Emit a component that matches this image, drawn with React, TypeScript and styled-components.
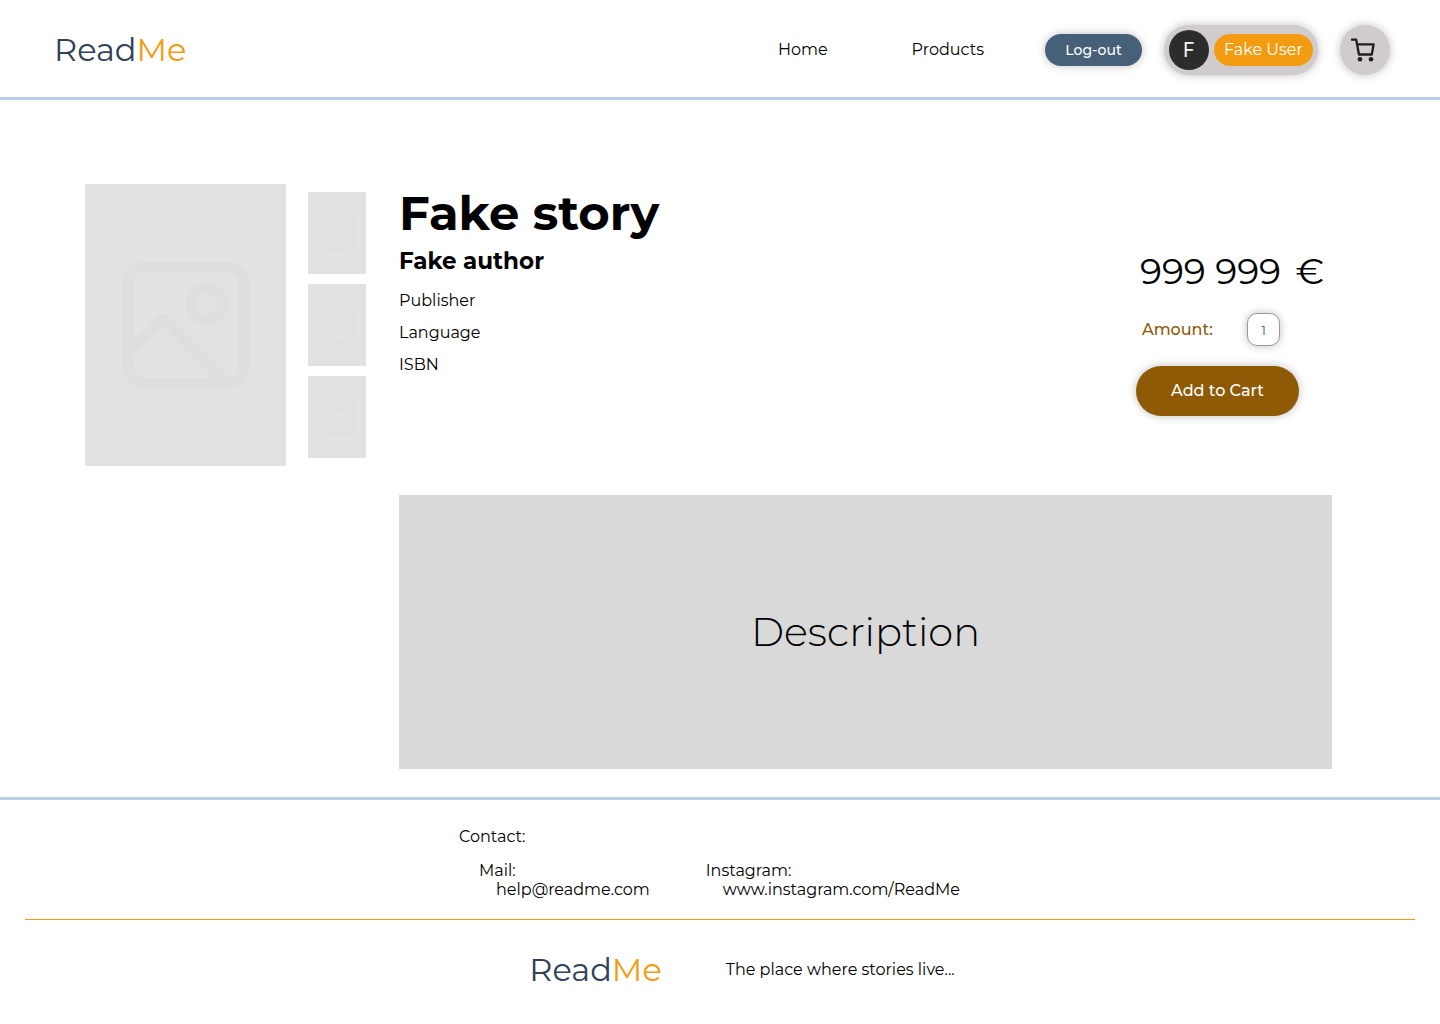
import React from 'react';
import styled, { createGlobalStyle } from 'styled-components';

const colors = {
  ink: '#000000',
  navy: '#2f4257',
  orange: '#f39c12',
  steel: '#46607a',
  rule: '#b9cfe7',
  pill: '#d0cccd',
  brown: '#8e5a05',
};

const GlobalStyle = createGlobalStyle`
  *, *::before, *::after { box-sizing: border-box; }
  body {
    margin: 0;
    background: #ffffff;
    color: ${colors.ink};
    font-family: Montserrat, Inter, 'Open Sans', sans-serif;
    font-size: 16px;
    line-height: 20px;
  }
  h1, h2, p, ul, figure, dl, dd { margin: 0; padding: 0; }
  button, input { font: inherit; }
  a { color: inherit; text-decoration: none; }
`;

const Page = styled.div`
  display: flex;
  flex-direction: column;
  min-height: 100vh;
`;

const Header = styled.header`
  display: flex;
  align-items: center;
  justify-content: space-between;
  height: 100px;
  padding: 3px 50px 0 54px;
  border-bottom: 3px solid ${colors.rule};
`;

const Brand = styled.a`
  font-size: 32px;
  line-height: 40px;
  font-weight: 400;
  color: ${colors.navy};
`;

const BrandAccent = styled.span`
  color: ${colors.orange};
`;

const HeaderActions = styled.div`
  display: flex;
  align-items: center;
  gap: 22px;
`;

const Nav = styled.nav`
  display: flex;
  gap: 84px;
  margin-right: 39px;
`;

const LogoutButton = styled.button`
  width: 97px;
  height: 32px;
  padding: 0;
  border: 0;
  border-radius: 16px;
  background: ${colors.steel};
  color: #ffffff;
  font-size: 14px;
  font-weight: 500;
  box-shadow: 0 0 10px rgba(0, 0, 0, 0.25);
`;

const UserPill = styled.div`
  display: flex;
  align-items: center;
  gap: 5px;
  height: 50px;
  padding: 0 5px;
  border-radius: 25px;
  background: ${colors.pill};
  box-shadow: 0 0 10px rgba(0, 0, 0, 0.25);
`;

const Avatar = styled.span`
  display: flex;
  align-items: center;
  justify-content: center;
  width: 40px;
  height: 40px;
  border-radius: 50%;
  background: #2c2c2c;
  color: #f5f5f5;
  font-family: Inter, sans-serif;
  font-size: 20px;
`;

const UserButton = styled.button`
  width: 99px;
  height: 32px;
  padding: 0;
  border: 0;
  border-radius: 16px;
  background: ${colors.orange};
  color: #ffffff;
`;

const CartButton = styled.button`
  display: flex;
  align-items: center;
  justify-content: center;
  width: 50px;
  height: 50px;
  padding: 0 4px 0 0;
  border: 0;
  border-radius: 50%;
  background: ${colors.pill};
  box-shadow: 0 0 10px rgba(0, 0, 0, 0.25);
`;

const Main = styled.main`
  display: grid;
  grid-template-columns: 281px minmax(0, 1fr) 196px;
  column-gap: 33px;
  row-gap: 29px;
  padding: 84px 108px 28px 85px;
`;

const Gallery = styled.section`
  display: flex;
  align-items: center;
  gap: 22px;
  height: 282px;
`;

const Cover = styled.figure`
  display: flex;
  align-items: center;
  justify-content: center;
  width: 201px;
  height: 282px;
  background: #e2e2e2;
`;

const Thumbnails = styled.ul`
  display: flex;
  flex-direction: column;
  gap: 10px;
  list-style: none;
`;

const Thumbnail = styled.li<{ $flipped?: boolean }>`
  display: flex;
  align-items: center;
  justify-content: center;
  width: 58px;
  height: 82px;
  background: #e2e2e2;
  transform: ${({ $flipped }) => ($flipped ? 'scaleY(-1)' : 'none')};
`;

const Title = styled.h1`
  font-size: 48px;
  line-height: 58px;
  font-weight: 700;
`;

const Author = styled.h2`
  padding-top: 5px;
  font-size: 23px;
  line-height: 28px;
  font-weight: 700;
`;

const Facts = styled.ul`
  display: flex;
  flex-direction: column;
  gap: 12px;
  padding-top: 16px;
  list-style: none;
`;

const Purchase = styled.section`
  padding-top: 64px;
`;

const Price = styled.p`
  display: flex;
  justify-content: space-between;
  padding: 0 8px 0 4px;
  font-size: 36px;
  line-height: 46px;
  font-weight: 400;
`;

const AmountRow = styled.div`
  display: flex;
  align-items: center;
  justify-content: space-between;
  padding: 19px 52px 20px 6px;
`;

const AmountLabel = styled.label`
  color: ${colors.brown};
  font-weight: 500;
`;

const AmountInput = styled.input`
  width: 33px;
  height: 33px;
  padding: 0;
  border: 1px solid #999999;
  border-radius: 10px;
  background: #ffffff;
  color: #555555;
  font-size: 13px;
  text-align: center;
  box-shadow: 0 0 8px rgba(0, 0, 0, 0.25);
`;

const AddButton = styled.button`
  width: 163px;
  height: 50px;
  padding: 0;
  border: 0;
  border-radius: 25px;
  background: ${colors.brown};
  color: #ffffff;
  font-weight: 500;
  box-shadow: 0 0 10px rgba(0, 0, 0, 0.25);
`;

const Description = styled.section`
  grid-column: 2 / -1;
  display: flex;
  align-items: center;
  justify-content: center;
  min-height: 274px;
  background: #d9d9d9;
  font-size: 40px;
  line-height: 48px;
  font-weight: 300;
`;

const Footer = styled.footer`
  border-top: 3px solid ${colors.rule};
`;

const Contact = styled.section`
  width: 522px;
  margin: 0 auto;
  padding: 27px 0 20px;
`;

const Channels = styled.dl`
  display: flex;
  gap: 56px;
  padding: 14px 0 0 20px;
`;

const Channel = styled.div`
  line-height: 19px;
`;

const Address = styled.dd`
  padding-left: 17px;
`;

const Closing = styled.div`
  display: flex;
  align-items: center;
  justify-content: center;
  gap: 64px;
  margin: 0 25px;
  padding: 30px 0 30px 44px;
  border-top: 1px solid ${colors.orange};
`;

const PictureShapes = ({ color, width }: { color: string; width: number }) => (
  <g stroke={color} strokeWidth={width}>
    <rect x="5" y="5" width="116" height="116" rx="16" />
    <circle cx="84" cy="42" r="16" />
    <path d="M6 90 41 57 103 120" />
  </g>
);

const PictureIcon = ({ size, fill, inset }: { size: number; fill: string; inset: number }) => (
  <svg width={size} height={size} viewBox="0 0 126 126" fill="none" strokeLinejoin="round" aria-hidden="true">
    <PictureShapes color="#dcdcdc" width={10} />
    <PictureShapes color={fill} width={10 - inset} />
  </svg>
);

const CartIcon = () => (
  <svg width="26" height="26" viewBox="0 0 26 26" fill="none" stroke="#1e1e1e" strokeWidth="2.3" strokeLinejoin="round" aria-hidden="true">
    <path d="M1 2.7h5.2l2.8 14.8h12.8l1.8-10.2H7" />
    <circle cx="10" cy="22.3" r="2.3" fill="#1e1e1e" stroke="none" />
    <circle cx="21" cy="22.3" r="2.3" fill="#1e1e1e" stroke="none" />
  </svg>
);

const Logo = () => (
  <Brand href="#home">
    Read<BrandAccent>Me</BrandAccent>
  </Brand>
);

export default function App() {
  return (
    <Page>
      <GlobalStyle />
      <Header>
        <Logo />
        <HeaderActions>
          <Nav>
            <a href="#home">Home</a>
            <a href="#products">Products</a>
          </Nav>
          <LogoutButton type="button">Log-out</LogoutButton>
          <UserPill>
            <Avatar>F</Avatar>
            <UserButton type="button">Fake User</UserButton>
          </UserPill>
          <CartButton type="button" aria-label="Cart">
            <CartIcon />
          </CartButton>
        </HeaderActions>
      </Header>

      <Main>
        <Gallery>
          <Cover>
            <PictureIcon size={126} fill="#dedede" inset={1} />
          </Cover>
          <Thumbnails>
            <Thumbnail><PictureIcon size={36} fill="#e2e2e2" inset={4} /></Thumbnail>
            <Thumbnail><PictureIcon size={36} fill="#e2e2e2" inset={4} /></Thumbnail>
            <Thumbnail $flipped><PictureIcon size={36} fill="#e2e2e2" inset={4} /></Thumbnail>
          </Thumbnails>
        </Gallery>

        <section>
          <Title>Fake story</Title>
          <Author>Fake author</Author>
          <Facts>
            <li>Publisher</li>
            <li>Language</li>
            <li>ISBN</li>
          </Facts>
        </section>

        <Purchase>
          <Price>
            <span>999 999</span>
            <span>€</span>
          </Price>
          <AmountRow>
            <AmountLabel htmlFor="amount">Amount:</AmountLabel>
            <AmountInput id="amount" type="text" inputMode="numeric" defaultValue="1" />
          </AmountRow>
          <AddButton type="button">Add to Cart</AddButton>
        </Purchase>

        <Description>Description</Description>
      </Main>

      <Footer>
        <Contact>
          <p>Contact:</p>
          <Channels>
            <Channel>
              <dt>Mail:</dt>
              <Address><a href="mailto:help@readme.com">help@readme.com</a></Address>
            </Channel>
            <Channel>
              <dt>Instagram:</dt>
              <Address><a href="#instagram">www.instagram.com/ReadMe</a></Address>
            </Channel>
          </Channels>
        </Contact>
        <Closing>
          <Logo />
          <p>The place where stories live...</p>
        </Closing>
      </Footer>
    </Page>
  );
}
